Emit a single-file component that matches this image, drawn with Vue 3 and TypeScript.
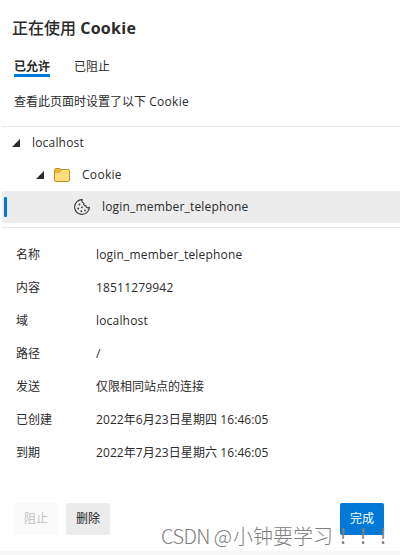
<script setup lang="ts">
interface Field {
  label: string
  value: string
  kind?: string
}

const fields: Field[] = [
  { label: '名称', value: 'login_member_telephone', kind: 'latin' },
  { label: '内容', value: '18511279942', kind: 'latin' },
  { label: '域', value: 'localhost', kind: 'latin' },
  { label: '路径', value: '/' },
  { label: '发送', value: '仅限相同站点的连接' },
  { label: '已创建', value: '2022年6月23日星期四 16:46:05', kind: 'date' },
  { label: '到期', value: '2022年7月23日星期六 16:46:05', kind: 'date' },
]
</script>

<template>
  <main class="dialog">
    <h1 class="title">正在使用 <span class="title-latin">Cookie</span></h1>
    <nav class="tabs">
      <span class="tab active">已允许</span>
      <span class="tab">已阻止</span>
    </nav>
    <p class="hint">查看此页面时设置了以下 <span class="word">Cookie</span></p>

    <section class="tree">
      <div class="node level-0">
        <svg class="arrow" width="8" height="8" viewBox="0 0 8 8"><path d="M8 0V8H0Z" fill="#2b2b2b" /></svg>
        <span class="latin">localhost</span>
      </div>
      <div class="node level-1">
        <svg class="arrow" width="8" height="8" viewBox="0 0 8 8"><path d="M8 0V8H0Z" fill="#2b2b2b" /></svg>
        <svg class="folder" width="16" height="14" viewBox="0 0 16 14">
          <path d="M.5 2.2Q.5.5 2.2.5H5.200Q5.800.5 6.300 1L7 1.500H13.800Q15.500 1.500 15.500 3.200V11.800Q15.500 13.500 13.800 13.500H2.200Q.5 13.500.5 11.800Z" fill="#ffdc7c" stroke="#b98b1c" />
          <path d="M1 4V2.200Q1 1 2.200 1H5.500L7 2L5.700 4Z" fill="#f2bd2c" />
          <path d="M.8 4.200H5.200Q5.800 4.200 6.200 3.700L7.300 1.900" fill="none" stroke="#c99a2b" stroke-width=".8" />
        </svg>
        <span class="word">Cookie</span>
      </div>
      <div class="node level-2 selected">
        <svg class="cookie" width="16" height="16" viewBox="0 0 16 16">
          <path d="M8.300 .6A7.400 7.400 0 1 0 15.400 8.200Q14.600 9.200 13.300 8.800Q11.900 8.400 12 6.900Q10.500 7 9.900 5.800Q9.500 4.900 9.900 4.200Q8.100 3.900 7.900 2.300Q7.800 1.300 8.300 .6Z" fill="none" stroke="#333" stroke-width="1.100" stroke-linejoin="round" />
          <g fill="#333"><circle cx="5.500" cy="5.500" r=".9" /><circle cx="4.200" cy="9.500" r=".9" /><circle cx="8" cy="8.300" r=".9" /><circle cx="7.300" cy="12.200" r=".9" /><circle cx="11" cy="11.300" r=".9" /></g>
        </svg>
        <span class="latin">login_member_telephone</span>
      </div>
    </section>

    <dl class="fields">
      <div v-for="field in fields" :key="field.label" class="field">
        <dt>{{ field.label }}</dt>
        <dd :class="field.kind">{{ field.value }}</dd>
      </div>
    </dl>

    <footer class="actions">
      <button class="button disabled" disabled>阻止</button>
      <button class="button">删除</button>
      <button class="button primary">完成</button>
    </footer>
    <div class="watermark"><span class="handle">CSDN @</span><span>小钟要学习</span><span class="marks">！！！</span></div>
  </main>
</template>

<style>
body {
  background: #fff;
}
</style>

<style scoped>
.dialog {
  position: relative;
  box-sizing: border-box;
  display: flex;
  flex-direction: column;
  width: 400px;
  height: 555px;
  overflow: hidden;
  border-bottom: 4px solid #f7f7f7;
  background: #fff;
  color: #2b2b2b;
  font: 12px/18px "Open Sans", "Noto Sans CJK SC", sans-serif;
}

.title {
  margin: 16px 0 0 12px;
  font-size: 16px;
  line-height: 24px;
  font-weight: 500;
  white-space: nowrap;
}

.title-latin {
  font-weight: 700;
  letter-spacing: 0.3px;
}

.latin {
  letter-spacing: 0.18px;
}

.word {
  letter-spacing: 0.3px;
}

.date {
  letter-spacing: 0.08px;
}

.tabs {
  display: flex;
  gap: 24px;
  margin: 18px 0 0 14px;
}

.tab {
  box-sizing: border-box;
  height: 19px;
  white-space: nowrap;
}

.tab.active {
  border-bottom: 3px solid #0078d7;
  font-weight: 600;
}

.hint {
  margin: 16px 0 0 14px;
}

.tree {
  box-sizing: border-box;
  height: 102px;
  margin: 15px 0 0 2px;
  border-top: 1px solid #e8e8e8;
  border-bottom: 1px solid #e8e8e8;
}

.node {
  box-sizing: border-box;
  display: flex;
  align-items: center;
  height: 32px;
}

.level-0 {
  padding-left: 10px;
}

.level-1 {
  padding-left: 34px;
}

.level-2 {
  padding-left: 2px;
}

.arrow {
  margin-right: 12px;
}

.folder {
  margin: 0 12px 0 0;
}

.level-1 .arrow {
  margin-right: 10px;
}

.selected {
  border-radius: 2px 0 0 2px;
  background: #ececec;
}

.selected::before {
  width: 3px;
  height: 20px;
  border-radius: 1px;
  background: #0078d7;
  content: "";
}

.cookie {
  margin: 0 12px 0 67px;
}

.fields {
  margin: 10px 0 0 16px;
}

.field {
  display: grid;
  grid-template-columns: 80px auto;
  align-items: center;
  height: 33px;
}

.field dd {
  justify-self: start;
  margin: 0;
  white-space: nowrap;
}

.actions {
  display: flex;
  gap: 8px;
  margin: 34px 16px 0 14px;
}

.button {
  width: 44px;
  height: 32px;
  padding: 0;
  border: 0;
  border-radius: 2px;
  background: #ececec;
  color: #222;
  font: inherit;
}

.disabled {
  background: #fafafa;
  color: #c3c3c3;
}

.primary {
  margin-left: auto;
  background: #0078d7;
  color: #fff;
}

.watermark {
  position: absolute;
  top: 523px;
  left: 161px;
  display: flex;
  color: #808080;
  font: 300 20px/26px "Noto Sans CJK SC", sans-serif;
  white-space: nowrap;
}

.handle {
  width: 72px;
  letter-spacing: -0.6px;
}

.marks {
  font-family: "Noto Sans CJK TC", sans-serif;
  font-weight: 400;
}
</style>
